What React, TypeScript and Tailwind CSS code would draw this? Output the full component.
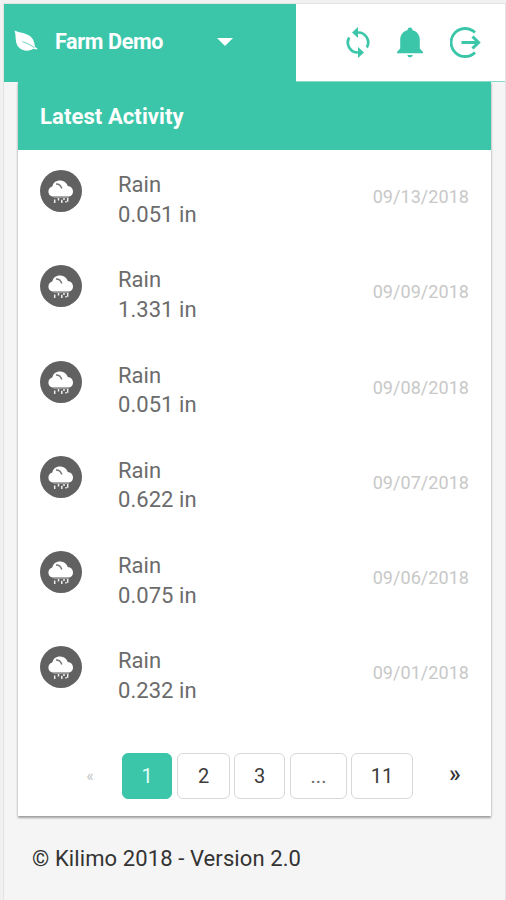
type Activity = {
  id: number;
  title: string;
  amount: string;
  date: string;
};

const activities: Activity[] = [
  { id: 1, title: "Rain", amount: "0.051 in", date: "09/13/2018" },
  { id: 2, title: "Rain", amount: "1.331 in", date: "09/09/2018" },
  { id: 3, title: "Rain", amount: "0.051 in", date: "09/08/2018" },
  { id: 4, title: "Rain", amount: "0.622 in", date: "09/07/2018" },
  { id: 5, title: "Rain", amount: "0.075 in", date: "09/06/2018" },
  { id: 6, title: "Rain", amount: "0.232 in", date: "09/01/2018" },
];

const pages = [
  { label: "1", className: "ml-[25px] w-[50px] border-[#3bc6aa] bg-[#3bc6aa] text-[#e2fff9]" },
  { label: "2", className: "ml-[5px] w-[53px] border-[#d8d8d8] text-[#3c3c3c]" },
  { label: "3", className: "ml-[4px] w-[51px] border-[#d8d8d8] text-[#3c3c3c]" },
  { label: "...", className: "ml-[5px] w-[57px] border-[#d8d8d8] text-[#6c6c6c]" },
  { label: "11", className: "ml-[4px] w-[62px] border-[#d8d8d8] text-[#3c3c3c]" },
];

function LeafIcon() {
  return (
    <svg viewBox="0 0 24 22" className="h-[22px] w-6" fill="none">
      <path
        d="M0.5 0.5C5 3 13 2.5 17.5 7.5C20.3 10.6 20.5 14 21 17L23.5 18.5L22.5 19.5L19.5 18.8C15.5 21.5 8.5 21.5 4.5 17C0.5 12.5 2.5 5.5 0.5 0.5Z"
        fill="#fff"
      />
      <path d="M8.5 11.8C12 12.5 15.5 14.3 20.5 17.7" stroke="#6bd3bd" strokeWidth="1" />
    </svg>
  );
}

function SyncIcon() {
  return (
    <svg viewBox="0 0 24 31" className="h-[31px] w-6" fill="none">
      <path
        d="M9.5 5.5H12A10 10 0 0 1 20.8 20.5M14.5 25.5H12A10 10 0 0 1 3.2 10.5"
        stroke="#3bc6aa"
        strokeWidth="2.7"
      />
      <path d="M12 0V11L6 5.5ZM12 20V31L18 25.5Z" fill="#3bc6aa" />
    </svg>
  );
}

function BellIcon() {
  return (
    <svg viewBox="0 0 26 31" className="h-[31px] w-[26px]" fill="#3bc6aa">
      <path d="M13 0.5C14.6 0.5 15.5 1.6 15.5 3.3C20.2 4.5 22.8 8.3 22.8 13V21.5L26 25V26.3H0V25L3.2 21.5V13C3.2 8.3 5.8 4.5 10.5 3.3C10.5 1.6 11.4 0.5 13 0.5Z" />
      <path d="M10.3 28H15.7C15.4 29.6 14.5 30.3 13 30.3S10.6 29.6 10.3 28Z" />
    </svg>
  );
}

function LogoutIcon() {
  return (
    <svg viewBox="0 0 31 31" className="size-[31px]" fill="none" stroke="#3bc6aa">
      <path d="M25 5.6A14 14 0 1 0 25 25.4" strokeWidth="2.8" />
      <path d="M11.5 15.5H28M22.5 9.5L28.5 15.5L22.5 21.5" strokeWidth="3.1" />
    </svg>
  );
}

function RainIcon() {
  return (
    <svg viewBox="0 0 42 42" className="size-[42px] shrink-0" fill="none">
      <circle cx="21" cy="21" r="21" fill="#616161" />
      <path
        d="M14 26.5C10.5 26.5 8.4 24.5 8.4 21.5C8.4 18.5 10.6 16.7 12.3 16.5C13 12.8 16 10.5 19.8 10.5C23.5 10.5 26.8 12.6 27.7 16C31 16.3 33 18.6 33 21.5C33 24.5 31 26.5 28 26.5Z"
        fill="#fff"
      />
      <path d="M16 13.9C18.5 13.8 21 15.7 21.8 18.5" stroke="#777" strokeWidth="1.5" />
      <path d="M13.5 27.3H29" stroke="#9a9a9a" strokeWidth="1.2" />
      <path
        d="M14.7 29.5V33M18.5 28V30.5M21.8 29.8V33M24 28V30M27.7 28V31.8M26 31V32.5"
        stroke="#eee"
        strokeWidth="1.5"
      />
    </svg>
  );
}

export default function App() {
  return (
    <div className="flex h-[900px] w-[506px] flex-col overflow-hidden bg-[#f1f1f1] pt-[3px] pl-[3px] font-[Roboto,sans-serif]">
      <div className="flex w-[503px] flex-1 flex-col border border-[#e2e2e2] border-b-0 bg-[#f5f5f5]">
        <header className="relative z-10 flex h-[78px] shrink-0">
          <div className="flex w-[292px] items-center bg-[#3bc6aa] pl-[10px] text-white">
            <div className="-mt-[5px]">
              <LeafIcon />
            </div>
            <span className="ml-[17px] -mt-[1px] text-[21.5px] font-bold tracking-[-0.35px]">
              Farm Demo
            </span>
            <svg viewBox="0 0 16 8" className="ml-auto mr-[63px] -mt-[2px] h-2 w-4" fill="#fff">
              <path d="M0 0H16L8 8Z" />
            </svg>
          </div>
          <div className="flex flex-1 items-center border-b border-[#8bd9c8] bg-white pl-[50px]">
            <SyncIcon />
            <div className="ml-[27px]">
              <BellIcon />
            </div>
            <div className="ml-[27px]">
              <LogoutIcon />
            </div>
          </div>
        </header>

        <main className="ml-[14px] flex h-[734px] w-[473px] shrink-0 flex-col bg-white shadow-[0_2px_2px_rgba(0,0,0,0.32),0_0_3px_rgba(0,0,0,0.12)]">
          <h2 className="flex h-[68px] shrink-0 items-center bg-[#3bc6aa] pl-[22px] text-[22px] font-bold tracking-[0.1px] text-white">
            Latest Activity
          </h2>
          <ul className="pt-[20px]">
            {activities.map((activity) => (
              <li key={activity.id} className="flex h-[95.3px] pl-[22px] pr-[22px]">
                <RainIcon />
                <div className="ml-[36px] text-[22px] leading-[29.5px] tracking-[0.05px] text-[#6b6b6b]">
                  <p>{activity.title}</p>
                  <p>{activity.amount}</p>
                </div>
                <span className="ml-auto mt-[14px] text-[18px] leading-[26px] tracking-[0.05px] text-[#c8c8c8]">
                  {activity.date}
                </span>
              </li>
            ))}
          </ul>
          <nav className="mt-[11px] flex h-[46px] items-center pl-[66px] text-[20px]">
            <span className="mr-[1px] w-[12px] text-center text-[16px] text-[#c4c4c4]">«</span>
            {pages.map((page) => (
              <button
                key={page.label}
                type="button"
                className={`h-[46px] rounded-[6px] border-[1.5px] ${page.className}`}
              >
                {page.label}
              </button>
            ))}
            <span className="ml-[36px] -mt-[4px] text-[24px] font-medium text-[#333]">»</span>
          </nav>
        </main>

        <footer className="mt-[28px] pl-[28px] text-[22px] leading-[30px] tracking-[0.1px] text-[#333]">
          © Kilimo 2018 - Version 2.0
        </footer>
      </div>
    </div>
  );
}
